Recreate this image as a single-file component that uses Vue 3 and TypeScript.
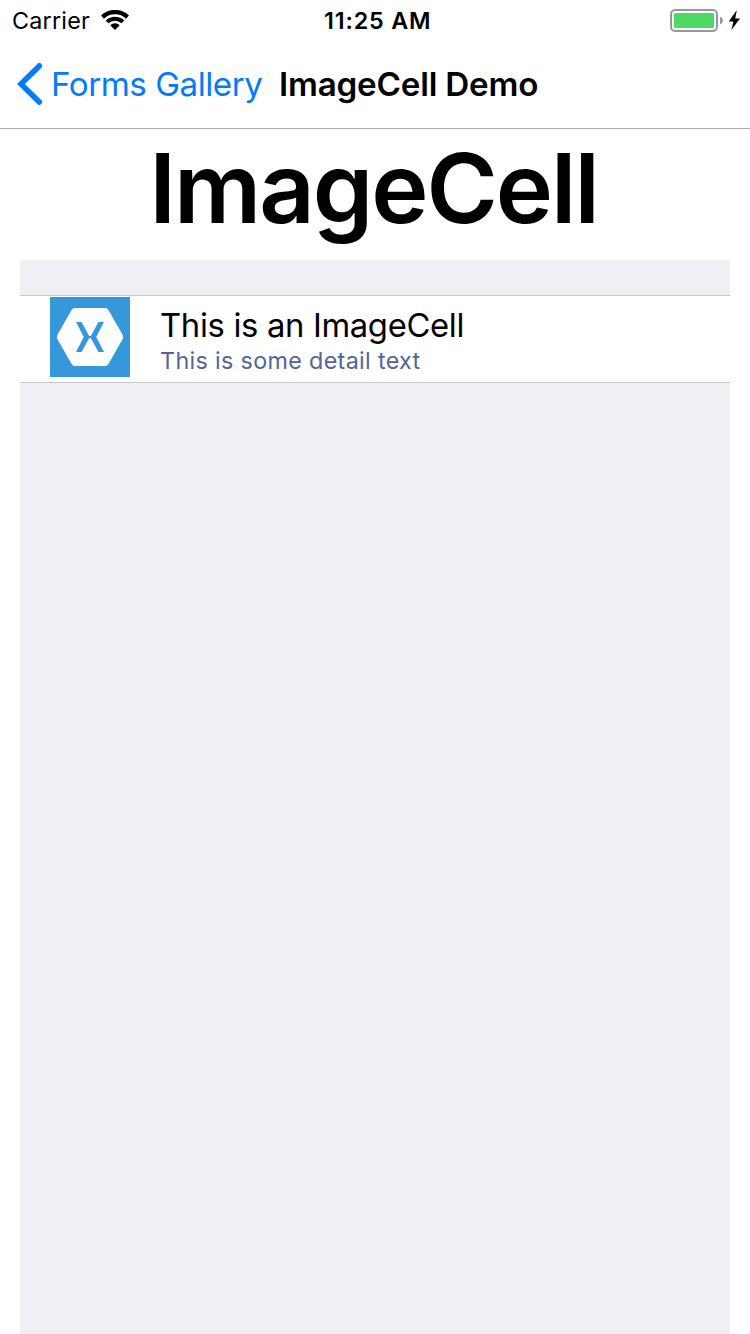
<script setup lang="ts">
interface ImageCell {
  title: string
  detail: string
}

const carrier = 'Carrier'
const time = '11:25 AM'
const backTitle = 'Forms Gallery'
const pageTitle = 'ImageCell Demo'
const heading = 'ImageCell'
const cells: ImageCell[] = [
  { title: 'This is an ImageCell', detail: 'This is some detail text' },
]
</script>

<template>
  <div class="screen">
    <header class="status">
      <div class="status-left">
        <span class="carrier">{{ carrier }}</span>
        <svg class="wifi" width="28" height="20" viewBox="0 0 28 20">
          <path d="M1.5 7.1A18 18 0 0 1 26.5 7.1" fill="none" stroke="#000" stroke-width="4.3" />
          <path d="M6.1 11.9A11.4 11.4 0 0 1 21.9 11.9" fill="none" stroke="#000" stroke-width="4" />
          <path d="M9.3 15.3A6.6 6.6 0 0 1 18.7 15.3L14 20Z" />
        </svg>
      </div>
      <span class="time">{{ time }}</span>
      <div class="status-right">
        <svg width="72" height="24" viewBox="0 0 72 24">
          <rect x="1" y="1" width="46" height="21" rx="4.2" fill="#fff" stroke="#98989a" stroke-width="2" />
          <rect x="4" y="4" width="40" height="15" rx="1.6" fill="#4cd964" />
          <path d="M50 7.6Q53 9 53 11.5T50 15.4Z" fill="#98989a" />
          <path d="M66.8 1L58.8 12.6H63.4L61.4 21L70 9.4H65.2Z" />
        </svg>
      </div>
    </header>

    <nav class="nav">
      <svg class="chevron" width="26" height="42" viewBox="0 0 26 42">
        <path d="M22.3 2.9L3.9 21L22.3 39.1" fill="none" stroke="#007aff" stroke-width="5.6" stroke-linecap="round" stroke-linejoin="miter" />
      </svg>
      <span class="back">{{ backTitle }}</span>
      <span class="nav-title">{{ pageTitle }}</span>
    </nav>

    <main class="content">
      <h1 class="heading">{{ heading }}</h1>
      <section class="table">
        <div v-for="cell in cells" :key="cell.title" class="cell">
          <svg class="thumb" width="80" height="80" viewBox="0 0 80 80">
            <rect width="80" height="80" fill="#3498db" />
            <path
              d="M25 11H55Q57.2 11 58.4 13L72.4 37.5Q73.8 40 72.4 42.5L58.4 67Q57.2 69 55 69H25Q22.8 69 21.6 67L7.6 42.5Q6.2 40 7.6 37.5L21.6 13Q22.8 11 25 11Z"
              fill="#fff"
            />
            <path
              d="M26 25H31.6L39.2 39H40.8L48.4 25H54L46.2 40L54 55H48.4L40.8 41H39.2L31.6 55H26L33.8 40Z"
              fill="#3498db"
            />
          </svg>
          <div class="labels">
            <span class="title">{{ cell.title }}</span>
            <span class="detail">{{ cell.detail }}</span>
          </div>
        </div>
      </section>
    </main>
  </div>
</template>

<style>
body {
  margin: 0;
  background: #fff;
}
</style>

<style scoped>
.screen {
  display: flex;
  flex-direction: column;
  width: 750px;
  height: 1334px;
  overflow: hidden;
  background: #fff;
  color: #000;
  font-family: Inter, "Liberation Sans", sans-serif;
  white-space: nowrap;
}

.status {
  display: grid;
  grid-template-columns: 324px 1fr 80px;
  height: 40px;
  line-height: 41px;
  font-size: 23.3px;
}

.status-left {
  display: flex;
  padding-left: 12px;
}

.carrier {
  width: 89px;
  letter-spacing: 0.25px;
}

.wifi {
  margin-top: 10px;
}

.time {
  font-weight: 600;
  letter-spacing: 0.85px;
}

.status-right {
  padding-top: 9px;
  line-height: 0;
}

.nav {
  display: flex;
  align-items: center;
  height: 88px;
  padding-left: 17px;
  border-bottom: 1px solid #b2b2b2;
  font-size: 33.2px;
}

.back {
  width: 228px;
  margin-left: 8px;
  color: #007aff;
  letter-spacing: -0.48px;
}

.nav-title {
  font-weight: 600;
  letter-spacing: -0.2px;
}

.content {
  display: flex;
  flex: 1;
  flex-direction: column;
  padding: 0 20px;
}

.heading {
  height: 131px;
  margin: 0;
  padding-right: 3px;
  font-size: 96.8px;
  font-weight: 600;
  letter-spacing: -2px;
  line-height: 118px;
  text-align: center;
}

.table {
  flex: 1;
  padding-top: 35px;
  background: #efeff4;
}

.cell {
  display: flex;
  height: 86px;
  padding-left: 30px;
  border-top: 1px solid #c8c7cc;
  border-bottom: 1px solid #c8c7cc;
  background: #fff;
}

.thumb {
  margin-top: 1px;
}

.labels {
  display: flex;
  flex-direction: column;
  margin-left: 30px;
  padding-top: 9px;
}

.title {
  font-size: 32.8px;
  letter-spacing: -0.33px;
  line-height: 40px;
}

.detail {
  color: #526695;
  font-size: 23.3px;
  letter-spacing: 0.34px;
  line-height: 31px;
}
</style>
